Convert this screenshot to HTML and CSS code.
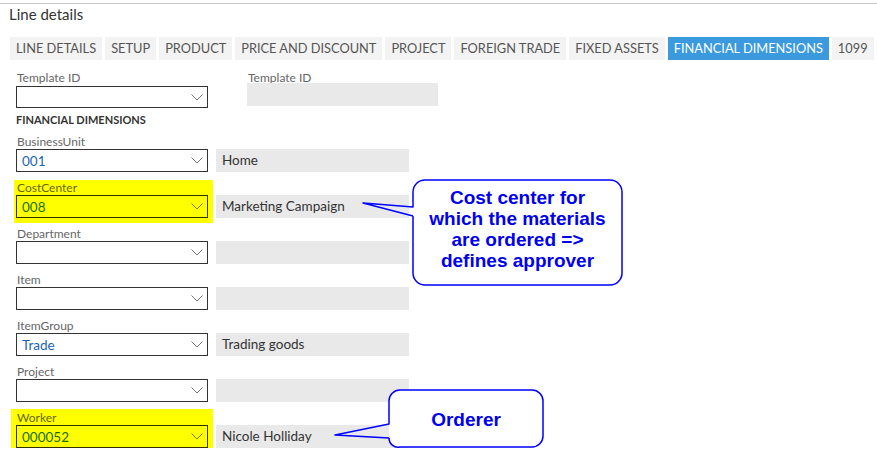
FILE: index.html
```html
<!DOCTYPE html>
<html>
<head>
<meta charset="utf-8">
<link rel="stylesheet" href="styles.css">
</head>
<body>
<div class="topline"></div>
<h1 class="title">Line details</h1>
<nav class="tabs">
  <span class="tab">LINE DETAILS</span>
  <span class="tab">SETUP</span>
  <span class="tab">PRODUCT</span>
  <span class="tab">PRICE AND DISCOUNT</span>
  <span class="tab">PROJECT</span>
  <span class="tab">FOREIGN TRADE</span>
  <span class="tab">FIXED ASSETS</span>
  <span class="tab active">FINANCIAL DIMENSIONS</span>
  <span class="tab">1099</span>
</nav>
<section class="form">
  <div class="template-row">
    <div class="col">
      <div class="label">Template ID</div>
      <div class="combo combo-template"><span class="val"></span><svg class="chev" width="12" height="7" viewBox="0 0 12 7"><polyline points="0.5,0.5 6,6 11.5,0.5"/></svg></div>
    </div>
    <div class="col col-ro">
      <div class="label">Template ID</div>
      <div class="ro"></div>
    </div>
  </div>
  <div class="heading">FINANCIAL DIMENSIONS</div>

  <div class="row">
    <div class="col">
      <div class="label">BusinessUnit</div>
      <div class="combo"><span class="val">001</span><svg class="chev" width="12" height="7" viewBox="0 0 12 7"><polyline points="0.5,0.5 6,6 11.5,0.5"/></svg></div>
    </div>
    <div class="desc">Home</div>
  </div>

  <div class="row">
    <div class="col hl hl-cc">
      <div class="label">CostCenter</div>
      <div class="combo"><span class="val">008</span><svg class="chev" width="12" height="7" viewBox="0 0 12 7"><polyline points="0.5,0.5 6,6 11.5,0.5"/></svg></div>
    </div>
    <div class="desc">Marketing Campaign</div>
  </div>

  <div class="row">
    <div class="col">
      <div class="label">Department</div>
      <div class="combo"><span class="val"></span><svg class="chev" width="12" height="7" viewBox="0 0 12 7"><polyline points="0.5,0.5 6,6 11.5,0.5"/></svg></div>
    </div>
    <div class="desc"></div>
  </div>

  <div class="row">
    <div class="col">
      <div class="label">Item</div>
      <div class="combo"><span class="val"></span><svg class="chev" width="12" height="7" viewBox="0 0 12 7"><polyline points="0.5,0.5 6,6 11.5,0.5"/></svg></div>
    </div>
    <div class="desc"></div>
  </div>

  <div class="row">
    <div class="col">
      <div class="label">ItemGroup</div>
      <div class="combo"><span class="val">Trade</span><svg class="chev" width="12" height="7" viewBox="0 0 12 7"><polyline points="0.5,0.5 6,6 11.5,0.5"/></svg></div>
    </div>
    <div class="desc">Trading goods</div>
  </div>

  <div class="row">
    <div class="col">
      <div class="label">Project</div>
      <div class="combo"><span class="val"></span><svg class="chev" width="12" height="7" viewBox="0 0 12 7"><polyline points="0.5,0.5 6,6 11.5,0.5"/></svg></div>
    </div>
    <div class="desc"></div>
  </div>

  <div class="row">
    <div class="col hl hl-worker">
      <div class="label">Worker</div>
      <div class="combo"><span class="val">000052</span><svg class="chev" width="12" height="7" viewBox="0 0 12 7"><polyline points="0.5,0.5 6,6 11.5,0.5"/></svg></div>
    </div>
    <div class="desc">Nicole Holliday</div>
  </div>
</section>

<svg class="overlay" width="877" height="454" viewBox="0 0 877 454">
  <rect class="bubble-fill" x="413" y="180" width="209" height="105" rx="12" ry="12"/>
  <path class="bubble-line" d="M413 216 V273 A12 12 0 0 0 425 285 H610 A12 12 0 0 0 622 273 V192 A12 12 0 0 0 610 180 H425 A12 12 0 0 0 413 192 V207 L363 203 L413 216"/>
  <rect class="bubble-fill" x="389" y="390" width="154" height="57" rx="11" ry="11"/>
  <path class="bubble-line" d="M389 438 A9 9 0 0 0 400 447 H532 A11 11 0 0 0 543 436 V401 A11 11 0 0 0 532 390 H400 A11 11 0 0 0 389 401 V424 L335 435 L389 438"/>
</svg>
<div class="bubble-text bt1">Cost center for<br>which the materials<br>are ordered =&gt;<br>defines approver</div>
<div class="bubble-text bt2">Orderer</div>
</body>
</html>
```

FILE: styles.css
```css
html, body {
  margin: 0;
  padding: 0;
}
body {
  position: relative;
  width: 877px;
  height: 454px;
  overflow: hidden;
  background: #fff;
  font-family: Lato, "Open Sans", sans-serif;
  color: #333;
}
.topline {
  margin-top: 3px;
  height: 1px;
  background: #c8c8c8;
}
.title {
  margin: 0;
  padding-left: 9px;
  font-size: 15px;
  font-weight: normal;
  line-height: 20px;
  color: #333;
}
.tabs {
  display: flex;
  gap: 3px;
  margin-top: 13px;
  padding-left: 10px;
  white-space: nowrap;
}
.tab {
  flex: 0 0 auto;
  height: 23px;
  line-height: 23px;
  padding: 0 6px;
  font-size: 12.8px;
  color: #555;
  background: #f3f3f3;
}
.tab.active {
  background: #3b99de;
  color: #fff;
}
.form {
  padding: 11px 0 0 16px;
}
.template-row {
  display: flex;
  gap: 39px;
  align-items: flex-start;
}
.col {
  width: 192px;
  display: flex;
  flex-direction: column;
}
.col-ro {
  width: 191px;
}
.label {
  font-size: 12px;
  line-height: 14px;
  color: #666;
  padding-left: 1px;
}
.combo {
  box-sizing: border-box;
  height: 23px;
  border: 1px solid #333;
  background: #fff;
  display: flex;
  align-items: center;
  padding: 0 4px 0 5px;
}
.combo-template {
  height: 22px;
  margin-top: 1px;
}
.val {
  flex: 1;
  font-size: 13.5px;
  color: #1b65b5;
}
.chev polyline {
  fill: none;
  stroke: #777;
  stroke-width: 1;
}
.ro {
  height: 23px;
  margin-top: -2px;
  background: #e9e9e9;
}
.heading {
  margin-top: 5px;
  font-size: 11px;
  font-weight: bold;
  line-height: 13px;
  color: #333;
}
.row {
  display: flex;
  align-items: flex-end;
  gap: 8px;
  padding-top: 9px;
}
.desc {
  box-sizing: border-box;
  width: 193px;
  height: 23px;
  line-height: 23px;
  padding-left: 6px;
  font-size: 13.5px;
  color: #333;
  background: #e9e9e9;
  white-space: nowrap;
}
.hl {
  background: #ffff00;
}
.hl .label { color: #666600; }
.hl .combo {
  background: transparent;
  border-color: #333300;
}
.hl .val { color: #1b6c00; }
.hl .chev polyline { stroke: #777700; }
.hl-cc {
  padding: 1px 5px 5px 2px;
  margin: -1px -5px -5px -2px;
}
.hl-worker {
  padding: 2px 5px 0 5px;
  margin: -2px -5px 0 -5px;
}
.overlay {
  position: absolute;
  left: 0;
  top: 0;
  pointer-events: none;
}
.bubble-fill {
  fill: #fff;
}
.bubble-line {
  fill: none;
  stroke: #0000ff;
  stroke-width: 1.5;
  stroke-linejoin: round;
}
.bubble-text {
  position: absolute;
  box-sizing: border-box;
  display: flex;
  align-items: center;
  justify-content: center;
  text-align: center;
  font-family: "Liberation Sans", Arial, sans-serif;
  font-weight: bold;
  font-size: 19px;
  line-height: 21px;
  color: #0000f0;
}
.bt1 {
  left: 413px;
  top: 180px;
  width: 209px;
  height: 105px;
  padding-bottom: 8px;
}
.bt2 {
  left: 389px;
  top: 390px;
  width: 154px;
  height: 57px;
  padding-top: 2px;
}
```
